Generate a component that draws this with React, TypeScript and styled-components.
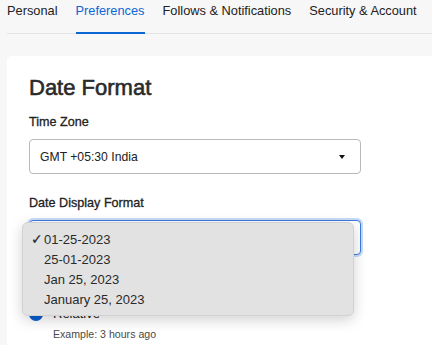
import styled, { createGlobalStyle } from 'styled-components';

const GlobalStyle = createGlobalStyle`
  html, body {
    margin: 0;
    padding: 0;
    background: #f7f7f7;
    font-family: "Liberation Sans", Arial, sans-serif;
    color: #222;
    overflow: hidden;
  }
`;

const tabs = ['Personal', 'Preferences', 'Follows & Notifications', 'Security & Account'];
const formats = ['01-25-2023', '25-01-2023', 'Jan 25, 2023', 'January 25, 2023'];

const App = () => {
  return (
    <>
      <GlobalStyle />
      <Page>
        <TabBar>
          {tabs.map((t) => (
            <Tab key={t} $active={t === 'Preferences'}>
              {t}
            </Tab>
          ))}
        </TabBar>
        <Card>
          <Title>Date Format</Title>
          <Field>
            <Label>Time Zone</Label>
            <SelectBox>
              <SelectText>GMT +05:30 India</SelectText>
              <Caret />
            </SelectBox>
          </Field>
          <Field>
            <Label>Date Display Format</Label>
            <SelectWrap>
              <SelectBox $focused>
                <SelectText>01-25-2023</SelectText>
                <Caret />
              </SelectBox>
              <Menu>
                {formats.map((f, i) => (
                  <MenuItem key={f}>
                    <Check>{i === 0 ? '✓' : ''}</Check>
                    {f}
                  </MenuItem>
                ))}
              </Menu>
            </SelectWrap>
          </Field>
          <RadioList>
            <RadioRow>
              <Radio />
              <RadioBody>
                <RadioLabel>Absolute</RadioLabel>
              </RadioBody>
            </RadioRow>
            <RadioRow>
              <Radio $checked />
              <RadioBody>
                <RadioLabel>Relative</RadioLabel>
                <Example>Example: 3 hours ago</Example>
              </RadioBody>
            </RadioRow>
          </RadioList>
        </Card>
      </Page>
    </>
  );
};

const Page = styled.div`
  padding-left: 7px;
  height: 345px;
  overflow: hidden;
`;

const TabBar = styled.div`
  display: flex;
  gap: 18px;
  height: 33px;
  border-bottom: 1px solid #e4e4e4;
  margin-right: -20px;
`;

const Tab = styled.div<{ $active?: boolean }>`
  font-size: 12.8px;
  line-height: 16px;
  padding-top: 3px;
  height: 29px;
  white-space: nowrap;
  color: ${(p) => (p.$active ? '#0b66d6' : '#222')};
  border-bottom: 2px solid ${(p) => (p.$active ? '#0b66d6' : 'transparent')};
  margin-bottom: -1px;
`;

const Card = styled.div`
  margin-top: 22px;
  margin-right: -40px;
  background: #fff;
  border-radius: 5px 0 0 0;
  padding: 19px 0 0 22px;
  height: 300px;
`;

const Title = styled.h1`
  margin: 0 0 13px;
  font-size: 22px;
  line-height: 26px;
  font-weight: 400;
  -webkit-text-stroke: 0.6px #2a2a2a;
  color: #2a2a2a;
`;

const Field = styled.div`
  display: flex;
  flex-direction: column;
  margin-bottom: 21px;
`;

const Label = styled.div`
  font-size: 12.6px;
  line-height: 16px;
  font-weight: 400;
  -webkit-text-stroke: 0.3px #222;
  color: #222;
  margin-bottom: 9px;
`;

const SelectWrap = styled.div`
  position: relative;
  width: 332px;
`;

const SelectBox = styled.div<{ $focused?: boolean }>`
  box-sizing: border-box;
  width: 332px;
  height: 35px;
  display: flex;
  align-items: center;
  justify-content: space-between;
  padding: 0 15px 0 10px;
  border: 1px solid ${(p) => (p.$focused ? '#3a7be0' : '#b9b9b9')};
  border-radius: 4px;
  box-shadow: ${(p) => (p.$focused ? '0 0 0 2px #c9dcf7' : 'none')};
  background: #fff;
`;

const SelectText = styled.span`
  font-size: 12.2px;
  color: #222;
`;

const Caret = styled.span`
  width: 0;
  height: 0;
  border-left: 3.5px solid transparent;
  border-right: 3.5px solid transparent;
  border-top: 4px solid #111;
`;

const Menu = styled.div`
  position: absolute;
  left: -7px;
  top: 2px;
  width: 332px;
  box-sizing: border-box;
  padding: 6px 0;
  background: #e2e2e2;
  border: 1px solid #d2d2d2;
  border-radius: 6px;
  box-shadow: 0 4px 14px rgba(0, 0, 0, 0.18);
  z-index: 2;
`;

const MenuItem = styled.div`
  display: flex;
  align-items: center;
  height: 20px;
  font-size: 13px;
  color: #2a2a2a;
  padding-left: 8px;
`;

const Check = styled.span`
  width: 13px;
  font-size: 13.5px;
  -webkit-text-stroke: 0.2px #2a2a2a;
`;

const RadioList = styled.div`
  display: flex;
  flex-direction: column;
  gap: 10px;
  margin-top: 25px;
`;

const RadioRow = styled.div`
  display: flex;
  gap: 10px;
`;

const Radio = styled.span<{ $checked?: boolean }>`
  box-sizing: border-box;
  width: 14px;
  height: 14px;
  margin-top: 1px;
  border-radius: 50%;
  background: ${(p) => (p.$checked ? '#0b5fd0' : '#fff')};
  border: ${(p) => (p.$checked ? '4px solid #0b5fd0' : '1px solid #999')};
  flex-shrink: 0;
`;

const RadioBody = styled.div`
  display: flex;
  flex-direction: column;
  gap: 6px;
`;

const RadioLabel = styled.div`
  font-size: 13px;
  line-height: 16px;
`;

const Example = styled.div`
  font-size: 10.6px;
  line-height: 13px;
  color: #4a4a4a;
`;

export default App;
